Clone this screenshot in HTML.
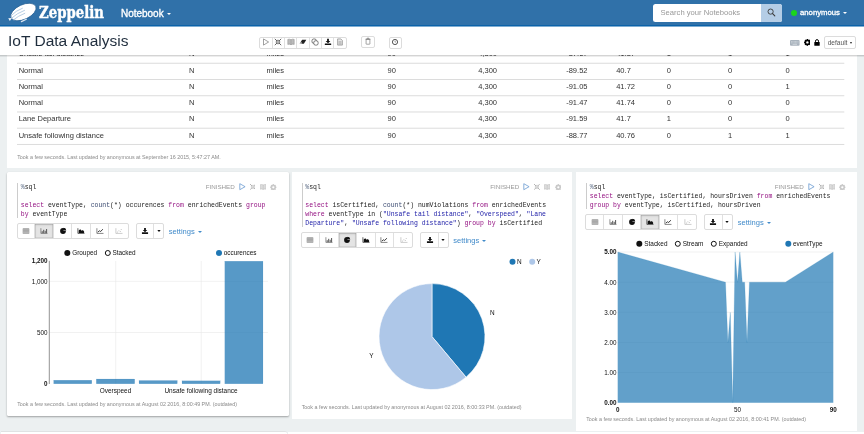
<!DOCTYPE html>
<html lang="en">
<head>
<meta charset="utf-8">
<title>IoT Data Analysis - Zeppelin</title>
<style>
*{box-sizing:border-box;margin:0;padding:0}
html,body{width:864px;height:434px;overflow:hidden;background:#ecf0f1;font-family:"Liberation Sans",sans-serif;color:#333}
body{position:relative;will-change:transform}
.abs{position:absolute}
.t{position:absolute;white-space:nowrap;line-height:1}
#nav{position:absolute;left:0;top:0;width:864px;height:26px;background:#3071a9;border-bottom:1px solid #0b62a8;box-shadow:0 1px 0 rgba(20,105,175,.55);z-index:5}
#brand{left:38.8px;top:5.4px;font-family:"DejaVu Serif Condensed","DejaVu Serif","Liberation Serif",serif;font-weight:bold;font-size:16.4px;color:#fff;transform:scaleX(.9);transform-origin:0 0;-webkit-text-stroke:.4px #fff}
#nb{left:121px;top:7.7px;font-size:10.5px;color:#fff;-webkit-text-stroke:.35px #fff;transform:scaleX(.948);transform-origin:0 0}
.caret{position:absolute;width:0;height:0;border-left:2.2px solid transparent;border-right:2.2px solid transparent;border-top:2.4px solid #fff}
#search{position:absolute;left:653px;top:3.5px;width:129.3px;height:18.8px;background:#fff;border-radius:2.5px;overflow:hidden}
#search .ph{left:7.5px;top:5.4px;font-size:7.63px;color:#999}
#search .btn{position:absolute;left:108.2px;top:0;width:21.1px;height:18.8px;background:#b4cde6}
#dot{position:absolute;left:790.8px;top:9.8px;width:6px;height:6px;border-radius:50%;background:#1bd61b}
#user{left:800px;top:8.7px;font-size:7.74px;color:#fff;-webkit-text-stroke:.3px #fff}
#titlebar{position:absolute;left:0;top:26px;width:864px;height:29px;background:#fff;box-shadow:0 1px 0 rgba(0,0,0,.1),0 2px 0 rgba(0,0,0,.07);z-index:4}
#title{left:7.7px;top:33px;font-size:15.2px;color:#1f2d3d;transform:scaleX(1.022);transform-origin:0 0}
.bg{position:absolute;border:.6px solid #dcdcdc;border-radius:2px;background:#fff;display:flex;overflow:hidden}
.bg>span{flex:1;border-right:.6px solid #e0e0e0;position:relative;display:block}
.bg>span:last-child{border-right:0}
.bg>span.on{background:#e4e4e4;box-shadow:inset 0 1px 2px rgba(0,0,0,.16),inset 0 0 0 .6px #c4c4c4}
.bg svg{position:absolute;left:50%;top:50%;transform:translate(-50%,-50%);overflow:visible}
.tb svg{margin-top:-1.1px}
.panel{position:absolute;background:#fff}
.cell{position:absolute;white-space:nowrap;line-height:1;font-size:7.52px;color:#333}
.foot{position:absolute;white-space:nowrap;line-height:1;font-size:5.37px;color:#8a8a8a}
.gut{position:absolute;width:0;border-left:1px solid #ccc}
.code{position:absolute;white-space:pre;font-family:"Liberation Mono",monospace;font-size:6.47px;line-height:9px;color:#222}
.o{color:#5b6b85}.k{color:#930f80}.f{color:#3c4c72}.s{color:#1a1aa6}
.fin{position:absolute;white-space:nowrap;line-height:1;font-size:6.24px;color:#999}
.set{position:absolute;white-space:nowrap;line-height:1;font-size:7.57px;color:#428bca}
svg text{font-family:"Liberation Sans",sans-serif}
</style>
</head>
<body>
<div id="nav"><svg class="abs" style="left:6px;top:1px" width="34" height="23" viewBox="6 1 34 23"><g transform="rotate(-25 23.4 12)"><ellipse cx="23.4" cy="12" rx="13.6" ry="7.3" fill="#fff" stroke="#245d91" stroke-width=".7"/><path d="M10.6 10.2 Q17 7.6 24.5 8.2 M10 12.6 Q17 10.4 25.5 11 M10.8 15 Q17 13.3 24.5 13.8" fill="none" stroke="#a9c4de" stroke-width=".75"/><path d="M10.2 12.6 L7 11.2 L7.4 14.4 Z" fill="#eef3f8"/><rect x="17" y="19.2" width="6.5" height="1.3" rx=".5" fill="#dce7f2"/></g></svg><div id="brand" class="t">Zeppelin</div><div id="nb" class="t">Notebook</div><i class="caret" style="left:167.2px;top:12.7px"></i><div id="search"><div class="ph t">Search your Notebooks</div><div class="btn"><svg class="abs" style="left:6.3px;top:4.6px" width="9" height="9" viewBox="0 0 9 9"><circle cx="3.6" cy="3.6" r="2.6" fill="none" stroke="#3a3a3a" stroke-width=".9"/><path d="M5.6 5.6 L7.8 7.8" stroke="#3a3a3a" stroke-width="1.1" stroke-linecap="round"/></svg></div></div><div id="dot"></div><div id="user" class="t">anonymous</div><i class="caret" style="left:842.6px;top:12.4px"></i></div>
<div id="titlebar"></div><div id="title" class="t" style="z-index:6">IoT Data Analysis</div><div class="bg tb" style="left:259.2px;top:37.2px;width:87.4px;height:11.4px;z-index:6"><span><svg width="6.6" height="7.4" viewBox="0 0 6.6 7.4"><path d="M.8 .6 L5.9 3.7 L.8 6.8 Z" fill="none" stroke="#777" stroke-width=".7" stroke-linejoin="round"/></svg></span><span><svg width="6.4" height="6.4" viewBox="0 0 6.4 6.4"><path d="M0 0 L2.2 2.2 M6.4 0 L4.2 2.2 M0 6.4 L2.2 4.2 M6.4 6.4 L4.2 4.2" stroke="#555" stroke-width=".9"/><path d="M1 2.6 H2.6 V1 M5.4 2.6 H3.8 V1 M1 3.8 H2.6 V5.4 M5.4 3.8 H3.8 V5.4" fill="none" stroke="#555" stroke-width=".7"/></svg></span><span><svg width="7" height="6.4" viewBox="0 0 7 6.4"><path d="M.3 .6 Q2 0 3.5 .9 Q5 0 6.7 .6 V5.6 Q5 5 3.5 5.9 Q2 5 .3 5.6 Z" fill="#bbb" stroke="#888" stroke-width=".5"/><path d="M3.5 .9 V5.9" stroke="#888" stroke-width=".4"/></svg></span><span><svg width="7" height="5" viewBox="0 0 7 5"><path d="M2.6 .3 H6.8 L4.4 4.3 H.2 Z" fill="#222"/><path d="M.9 3.1 L2.7 3.1 L2 4.3 L.2 4.3Z" fill="#ddd"/></svg></span><span><svg width="7" height="7" viewBox="0 0 7 7"><rect x=".5" y=".5" width="4.3" height="4.3" rx="1.6" fill="#fff" stroke="#444" stroke-width=".7"/><rect x="2.3" y="2.3" width="4.3" height="4.3" rx="1.6" fill="#fff" stroke="#444" stroke-width=".7"/></svg></span><span><svg width="6.4" height="6.4" viewBox="0 0 6.4 6.4"><path d="M2.3 0 H4.1 V2.2 H5.6 L3.2 4.5 L.8 2.2 H2.3 Z" fill="#111"/><rect x="0" y="4.6" width="6.4" height="1.7" rx=".3" fill="#111"/></svg></span><span><svg width="5.6" height="7" viewBox="0 0 5.6 7"><path d="M.4 .4 H3.6 L5.2 2 V6.6 H.4 Z" fill="#e8e8e8" stroke="#777" stroke-width=".6"/><path d="M1.3 3.2 H4.3 M1.3 4.4 H4.3 M1.3 5.5 H4.3" stroke="#888" stroke-width=".5"/></svg></span></div><div class="bg tb" style="left:361px;top:36.4px;width:13.5px;height:11.3px;z-index:6"><span><svg width="5.4" height="7" viewBox="0 0 5.4 7"><path d="M.8 1.8 H4.6 V6.3 Q4.6 6.7 4.2 6.7 H1.2 Q.8 6.7 .8 6.3 Z" fill="#fff" stroke="#666" stroke-width=".6"/><path d="M.2 1.7 H5.2 M1.9 1.5 V.6 H3.5 V1.5" fill="none" stroke="#666" stroke-width=".6"/></svg></span></div><div class="bg tb" style="left:389.2px;top:37.2px;width:12.4px;height:11.4px;z-index:6"><span><svg width="6.4" height="6.4" viewBox="0 0 6.4 6.4"><circle cx="3.2" cy="3.2" r="2.6" fill="#fff" stroke="#444" stroke-width=".9"/><path d="M3.2 1.7 V3.3 H4.2" fill="none" stroke="#555" stroke-width=".5"/></svg></span></div><svg class="abs" style="left:790.3px;top:40.2px;z-index:6" width="9.6" height="5.8" viewBox="0 0 9.6 5.8"><rect width="9.6" height="5.8" rx="1" fill="#a9b3bd"/><path d="M1.2 1.6 H8.4 M1.2 2.9 H8.4" stroke="#dfe4e8" stroke-width=".7" stroke-dasharray=".8 .5"/><path d="M2.6 4.3 H7" stroke="#dfe4e8" stroke-width=".7"/></svg><svg class="abs" style="left:803.6px;top:39.4px;z-index:6" width="6.8" height="6.8" viewBox="-3.6 -3.6 7.2 7.2"><circle r="2.35" fill="none" stroke="#000" stroke-width="1.5"/><g stroke="#000" stroke-width="1.3"><path d="M0 -3.5V3.5M-3.5 0H3.5M-2.5 -2.5L2.5 2.5M-2.5 2.5L2.5 -2.5"/></g><circle r="1.25" fill="#fff"/></svg><svg class="abs" style="left:814.3px;top:38.9px;z-index:6" width="6" height="7" viewBox="0 0 6 7"><path d="M1.5 3.2 V2.2 Q1.5 .6 3 .6 Q4.5 .6 4.5 2.2 V3.2" fill="none" stroke="#000" stroke-width="1"/><rect x=".3" y="3" width="5.4" height="3.7" rx=".5" fill="#000"/></svg><div class="bg" style="left:823.9px;top:36.2px;width:31.8px;height:12.4px;z-index:6"><span><b class="t" style="left:2.8px;top:2.6px;font-size:6.58px;font-weight:normal;color:#555">default</b><i class="caret" style="left:25.6px;top:5.3px;border-top-color:#222;border-width:2px 1.7px 0 1.7px;border-top-style:solid"></i></span></div>
<div class="panel" style="left:7px;top:50px;width:850px;height:118px"></div><div class="cell" style="left:18.7px;top:50.35px">Unsafe tail distance</div><div class="cell" style="left:189px;top:50.35px">N</div><div class="cell" style="left:266.5px;top:50.35px">miles</div><div class="cell" style="left:387.5px;top:50.35px">90</div><div class="cell" style="left:478.2px;top:50.35px">4,300</div><div class="cell" style="left:566.2px;top:50.35px">-87.67</div><div class="cell" style="left:616.2px;top:50.35px">41.87</div><div class="cell" style="left:666.7px;top:50.35px">1</div><div class="cell" style="left:728px;top:50.35px">1</div><div class="cell" style="left:785.5px;top:50.35px">1</div><div class="cell" style="left:18.7px;top:66.59px">Normal</div><div class="cell" style="left:189px;top:66.59px">N</div><div class="cell" style="left:266.5px;top:66.59px">miles</div><div class="cell" style="left:387.5px;top:66.59px">90</div><div class="cell" style="left:478.2px;top:66.59px">4,300</div><div class="cell" style="left:566.2px;top:66.59px">-89.52</div><div class="cell" style="left:616.2px;top:66.59px">40.7</div><div class="cell" style="left:666.7px;top:66.59px">0</div><div class="cell" style="left:728px;top:66.59px">0</div><div class="cell" style="left:785.5px;top:66.59px">0</div><div class="cell" style="left:18.7px;top:82.83px">Normal</div><div class="cell" style="left:189px;top:82.83px">N</div><div class="cell" style="left:266.5px;top:82.83px">miles</div><div class="cell" style="left:387.5px;top:82.83px">90</div><div class="cell" style="left:478.2px;top:82.83px">4,300</div><div class="cell" style="left:566.2px;top:82.83px">-91.05</div><div class="cell" style="left:616.2px;top:82.83px">41.72</div><div class="cell" style="left:666.7px;top:82.83px">0</div><div class="cell" style="left:728px;top:82.83px">0</div><div class="cell" style="left:785.5px;top:82.83px">1</div><div class="cell" style="left:18.7px;top:99.07px">Normal</div><div class="cell" style="left:189px;top:99.07px">N</div><div class="cell" style="left:266.5px;top:99.07px">miles</div><div class="cell" style="left:387.5px;top:99.07px">90</div><div class="cell" style="left:478.2px;top:99.07px">4,300</div><div class="cell" style="left:566.2px;top:99.07px">-91.47</div><div class="cell" style="left:616.2px;top:99.07px">41.74</div><div class="cell" style="left:666.7px;top:99.07px">0</div><div class="cell" style="left:728px;top:99.07px">0</div><div class="cell" style="left:785.5px;top:99.07px">0</div><div class="cell" style="left:18.7px;top:115.31px">Lane Departure</div><div class="cell" style="left:189px;top:115.31px">N</div><div class="cell" style="left:266.5px;top:115.31px">miles</div><div class="cell" style="left:387.5px;top:115.31px">90</div><div class="cell" style="left:478.2px;top:115.31px">4,300</div><div class="cell" style="left:566.2px;top:115.31px">-91.59</div><div class="cell" style="left:616.2px;top:115.31px">41.7</div><div class="cell" style="left:666.7px;top:115.31px">1</div><div class="cell" style="left:728px;top:115.31px">0</div><div class="cell" style="left:785.5px;top:115.31px">0</div><div class="cell" style="left:18.7px;top:131.55px">Unsafe following distance</div><div class="cell" style="left:189px;top:131.55px">N</div><div class="cell" style="left:266.5px;top:131.55px">miles</div><div class="cell" style="left:387.5px;top:131.55px">90</div><div class="cell" style="left:478.2px;top:131.55px">4,300</div><div class="cell" style="left:566.2px;top:131.55px">-88.77</div><div class="cell" style="left:616.2px;top:131.55px">40.76</div><div class="cell" style="left:666.7px;top:131.55px">0</div><div class="cell" style="left:728px;top:131.55px">1</div><div class="cell" style="left:785.5px;top:131.55px">1</div><div class="foot" style="left:17.2px;top:155px">Took a few seconds. Last updated by anonymous at September 16 2015, 5:47:27 AM.</div>
<div class="panel" style="left:7.2px;top:171.7px;width:281.5px;height:244.3px;border-radius:1.6px;box-shadow:0 1px 2px rgba(0,0,0,.33);"></div>
<div class="gut" style="left:17.3px;top:182.5px;height:35.6px"></div><div class="code" style="left:20.8px;top:183.4px"><span class="o">%</span>sql

<span class="k">select</span> eventType, <span class="f">count</span>(*) occurences <span class="k">from</span> enrichedEvents <span class="k">group</span>
<span class="k">by</span> eventType</div>
<div class="fin" style="left:205.7px;top:183.9px">FINISHED</div><svg class="abs" style="left:238.6px;top:183.3px" width="7" height="7.4" viewBox="0 0 7 7.4"><path d="M.8 .7 L6.1 3.7 L.8 6.7 Z" fill="none" stroke="#6a9bd1" stroke-width=".8" stroke-linejoin="round"/></svg><svg class="abs" style="left:249.5px;top:184px" width="5.8" height="5.8" viewBox="0 0 6 6"><path d="M0 0 L2.1 2.1 M6 0 L3.9 2.1 M0 6 L2.1 3.9 M6 6 L3.9 3.9" stroke="#aaa" stroke-width=".9"/><path d="M.9 2.5 H2.5 V.9 M5.1 2.5 H3.5 V.9 M.9 3.5 H2.5 V5.1 M5.1 3.5 H3.5 V5.1" fill="none" stroke="#b5b5b5" stroke-width=".6"/></svg><svg class="abs" style="left:259.6px;top:183.8px" width="6.4" height="6" viewBox="0 0 7 6.4"><path d="M.3 .6 Q2 0 3.5 .9 Q5 0 6.7 .6 V5.6 Q5 5 3.5 5.9 Q2 5 .3 5.6 Z" fill="#dcdcdc" stroke="#b4b4b4" stroke-width=".5"/><path d="M3.5 .9 V5.9" stroke="#b4b4b4" stroke-width=".4"/></svg><svg class="abs" style="left:270.4px;top:183.6px" width="6.6" height="6.6" viewBox="-3.6 -3.6 7.2 7.2"><circle r="2.35" fill="none" stroke="#c8c8c8" stroke-width="1.3"/><g stroke="#c8c8c8" stroke-width="1.1"><path d="M0 -3.5V3.5M-3.5 0H3.5M-2.5 -2.5L2.5 2.5M-2.5 2.5L2.5 -2.5"/></g><circle r="1.2" fill="#fff"/></svg>
<div class="bg" style="left:16.6px;top:223.2px;width:112px;height:16.2px"><span style="flex:0 0 17.5px"><svg width="6.6" height="5.6" viewBox="0 0 6.6 5.6"><rect width="6.6" height="5.6" rx=".5" fill="#9a9a9a"/><path d="M0 1.6H6.6M0 3H6.6M0 4.3H6.6" stroke="#d0d0d0" stroke-width=".5"/></svg></span><span style="flex:0 0 19.2px" class="on"><svg width="7" height="5.6" viewBox="0 0 7 5.6"><path d="M.4 0 V5.2 H7" fill="none" stroke="#666" stroke-width=".7"/><path d="M1.7 5V3M3.2 5V1.6M4.7 5V2.6M6.1 5V.8" stroke="#555" stroke-width="1"/></svg></span><span style="flex:0 0 18.1px"><svg width="6" height="6" viewBox="0 0 6 6"><circle cx="3" cy="3" r="2.9" fill="#111"/><path d="M3 3 L6 3 L5.6 1.2 Z" fill="#fff"/><path d="M3.3 2.7 V0 A3 3 0 0 1 6 2.7 Z" fill="#111" transform="translate(.3 -.3)"/></svg></span><span style="flex:0 0 18.8px"><svg width="7" height="5.6" viewBox="0 0 7 5.6"><path d="M.4 0 V5.2 H7" fill="none" stroke="#222" stroke-width=".7"/><path d="M1.2 4.9 V2.2 L2.7 1 L4.2 2.6 L5.4 1.9 L6.6 3.4 V4.9 Z" fill="#111"/></svg></span><span style="flex:0 0 18.2px"><svg width="7" height="5.6" viewBox="0 0 7 5.6"><path d="M.4 0 V5.2 H7" fill="none" stroke="#555" stroke-width=".7"/><path d="M1.3 4 L2.9 2.6 L4.2 3.3 L6.3 1" fill="none" stroke="#222" stroke-width=".9"/></svg></span><span style="flex:0 0 19.4px"><svg width="7" height="5.6" viewBox="0 0 7 5.6"><path d="M.4 0 V5.2 H7" fill="none" stroke="#aaa" stroke-width=".6"/><path d="M1.6 3.9h.8M3 2.6h.8M4.4 3.3h.8M5.3 1.3h.8" stroke="#aaa" stroke-width=".8"/></svg></span></div><div class="bg" style="left:135.8px;top:223.2px;width:28.4px;height:16.2px"><span style="flex:0 0 17.6px"><svg width="6.2" height="6" viewBox="0 0 6.2 6"><path d="M2.2 0 H4 V2 H5.4 L3.1 4.2 L.8 2 H2.2 Z" fill="#111"/><rect x="0" y="4.3" width="6.2" height="1.6" rx=".3" fill="#111"/></svg></span><span><svg width="3.4" height="2" viewBox="0 0 3.4 2"><path d="M0 0 H3.4 L1.7 2 Z" fill="#111"/></svg></span></div><div class="set" style="left:168.7px;top:227.5px">settings</div><i class="caret" style="left:197.9px;top:230.8px;border-top-color:#428bca;border-width:2.7px 2.3px 0 2.3px"></i><div class="foot" style="left:17.2px;top:401.7px">Took a few seconds. Last updated by anonymous at August 02 2016, 8:00:49 PM. (outdated)</div>
<div class="panel" style="left:291.8px;top:171.7px;width:280.7px;height:247.0px;"></div>
<div class="gut" style="left:301.8px;top:182.5px;height:44.5px"></div><div class="code" style="left:305.3px;top:183.4px"><span class="o">%</span>sql

<span class="k">select</span> isCertified, <span class="f">count</span>(*) numViolations <span class="k">from</span> enrichedEvents
<span class="k">where</span> eventType in (<span class="s">&quot;Unsafe tail distance&quot;</span>, <span class="s">&quot;Overspeed&quot;</span>, <span class="s">&quot;Lane</span>
<span class="s">Departure&quot;</span>, <span class="s">&quot;Unsafe following distance&quot;</span>) <span class="k">group</span> <span class="k">by</span> isCertified</div>
<div class="fin" style="left:490.2px;top:183.9px">FINISHED</div><svg class="abs" style="left:523.1px;top:183.3px" width="7" height="7.4" viewBox="0 0 7 7.4"><path d="M.8 .7 L6.1 3.7 L.8 6.7 Z" fill="none" stroke="#6a9bd1" stroke-width=".8" stroke-linejoin="round"/></svg><svg class="abs" style="left:534.0px;top:184px" width="5.8" height="5.8" viewBox="0 0 6 6"><path d="M0 0 L2.1 2.1 M6 0 L3.9 2.1 M0 6 L2.1 3.9 M6 6 L3.9 3.9" stroke="#aaa" stroke-width=".9"/><path d="M.9 2.5 H2.5 V.9 M5.1 2.5 H3.5 V.9 M.9 3.5 H2.5 V5.1 M5.1 3.5 H3.5 V5.1" fill="none" stroke="#b5b5b5" stroke-width=".6"/></svg><svg class="abs" style="left:544.1px;top:183.8px" width="6.4" height="6" viewBox="0 0 7 6.4"><path d="M.3 .6 Q2 0 3.5 .9 Q5 0 6.7 .6 V5.6 Q5 5 3.5 5.9 Q2 5 .3 5.6 Z" fill="#dcdcdc" stroke="#b4b4b4" stroke-width=".5"/><path d="M3.5 .9 V5.9" stroke="#b4b4b4" stroke-width=".4"/></svg><svg class="abs" style="left:554.9px;top:183.6px" width="6.6" height="6.6" viewBox="-3.6 -3.6 7.2 7.2"><circle r="2.35" fill="none" stroke="#c8c8c8" stroke-width="1.3"/><g stroke="#c8c8c8" stroke-width="1.1"><path d="M0 -3.5V3.5M-3.5 0H3.5M-2.5 -2.5L2.5 2.5M-2.5 2.5L2.5 -2.5"/></g><circle r="1.2" fill="#fff"/></svg>
<div class="bg" style="left:301.1px;top:232.2px;width:112px;height:16.2px"><span style="flex:0 0 17.5px"><svg width="6.6" height="5.6" viewBox="0 0 6.6 5.6"><rect width="6.6" height="5.6" rx=".5" fill="#9a9a9a"/><path d="M0 1.6H6.6M0 3H6.6M0 4.3H6.6" stroke="#d0d0d0" stroke-width=".5"/></svg></span><span style="flex:0 0 19.2px"><svg width="7" height="5.6" viewBox="0 0 7 5.6"><path d="M.4 0 V5.2 H7" fill="none" stroke="#666" stroke-width=".7"/><path d="M1.7 5V3M3.2 5V1.6M4.7 5V2.6M6.1 5V.8" stroke="#555" stroke-width="1"/></svg></span><span style="flex:0 0 18.1px" class="on"><svg width="6" height="6" viewBox="0 0 6 6"><circle cx="3" cy="3" r="2.9" fill="#111"/><path d="M3 3 L6 3 L5.6 1.2 Z" fill="#fff"/><path d="M3.3 2.7 V0 A3 3 0 0 1 6 2.7 Z" fill="#111" transform="translate(.3 -.3)"/></svg></span><span style="flex:0 0 18.8px"><svg width="7" height="5.6" viewBox="0 0 7 5.6"><path d="M.4 0 V5.2 H7" fill="none" stroke="#222" stroke-width=".7"/><path d="M1.2 4.9 V2.2 L2.7 1 L4.2 2.6 L5.4 1.9 L6.6 3.4 V4.9 Z" fill="#111"/></svg></span><span style="flex:0 0 18.2px"><svg width="7" height="5.6" viewBox="0 0 7 5.6"><path d="M.4 0 V5.2 H7" fill="none" stroke="#555" stroke-width=".7"/><path d="M1.3 4 L2.9 2.6 L4.2 3.3 L6.3 1" fill="none" stroke="#222" stroke-width=".9"/></svg></span><span style="flex:0 0 19.4px"><svg width="7" height="5.6" viewBox="0 0 7 5.6"><path d="M.4 0 V5.2 H7" fill="none" stroke="#aaa" stroke-width=".6"/><path d="M1.6 3.9h.8M3 2.6h.8M4.4 3.3h.8M5.3 1.3h.8" stroke="#aaa" stroke-width=".8"/></svg></span></div><div class="bg" style="left:420.3px;top:232.2px;width:28.4px;height:16.2px"><span style="flex:0 0 17.6px"><svg width="6.2" height="6" viewBox="0 0 6.2 6"><path d="M2.2 0 H4 V2 H5.4 L3.1 4.2 L.8 2 H2.2 Z" fill="#111"/><rect x="0" y="4.3" width="6.2" height="1.6" rx=".3" fill="#111"/></svg></span><span><svg width="3.4" height="2" viewBox="0 0 3.4 2"><path d="M0 0 H3.4 L1.7 2 Z" fill="#111"/></svg></span></div><div class="set" style="left:453.2px;top:236.5px">settings</div><i class="caret" style="left:482.4px;top:239.8px;border-top-color:#428bca;border-width:2.7px 2.3px 0 2.3px"></i><div class="foot" style="left:301.7px;top:405.0px">Took a few seconds. Last updated by anonymous at August 02 2016, 8:00:33 PM. (outdated)</div>
<div class="panel" style="left:576.1px;top:171.7px;width:280.7px;height:258.9px;"></div>
<div class="gut" style="left:586.3px;top:182.5px;height:26.7px"></div><div class="code" style="left:589.8px;top:183.4px"><span class="o">%</span>sql
<span class="k">select</span> eventType, isCertified, hoursDriven <span class="k">from</span> enrichedEvents
<span class="k">group</span> <span class="k">by</span> eventType, isCertified, hoursDriven</div>
<div class="fin" style="left:774.7px;top:183.9px">FINISHED</div><svg class="abs" style="left:807.6px;top:183.3px" width="7" height="7.4" viewBox="0 0 7 7.4"><path d="M.8 .7 L6.1 3.7 L.8 6.7 Z" fill="none" stroke="#6a9bd1" stroke-width=".8" stroke-linejoin="round"/></svg><svg class="abs" style="left:818.5px;top:184px" width="5.8" height="5.8" viewBox="0 0 6 6"><path d="M0 0 L2.1 2.1 M6 0 L3.9 2.1 M0 6 L2.1 3.9 M6 6 L3.9 3.9" stroke="#aaa" stroke-width=".9"/><path d="M.9 2.5 H2.5 V.9 M5.1 2.5 H3.5 V.9 M.9 3.5 H2.5 V5.1 M5.1 3.5 H3.5 V5.1" fill="none" stroke="#b5b5b5" stroke-width=".6"/></svg><svg class="abs" style="left:828.6px;top:183.8px" width="6.4" height="6" viewBox="0 0 7 6.4"><path d="M.3 .6 Q2 0 3.5 .9 Q5 0 6.7 .6 V5.6 Q5 5 3.5 5.9 Q2 5 .3 5.6 Z" fill="#dcdcdc" stroke="#b4b4b4" stroke-width=".5"/><path d="M3.5 .9 V5.9" stroke="#b4b4b4" stroke-width=".4"/></svg><svg class="abs" style="left:839.4px;top:183.6px" width="6.6" height="6.6" viewBox="-3.6 -3.6 7.2 7.2"><circle r="2.35" fill="none" stroke="#c8c8c8" stroke-width="1.3"/><g stroke="#c8c8c8" stroke-width="1.1"><path d="M0 -3.5V3.5M-3.5 0H3.5M-2.5 -2.5L2.5 2.5M-2.5 2.5L2.5 -2.5"/></g><circle r="1.2" fill="#fff"/></svg>
<div class="bg" style="left:585.3px;top:214.2px;width:112px;height:16.2px"><span style="flex:0 0 17.5px"><svg width="6.6" height="5.6" viewBox="0 0 6.6 5.6"><rect width="6.6" height="5.6" rx=".5" fill="#9a9a9a"/><path d="M0 1.6H6.6M0 3H6.6M0 4.3H6.6" stroke="#d0d0d0" stroke-width=".5"/></svg></span><span style="flex:0 0 19.2px"><svg width="7" height="5.6" viewBox="0 0 7 5.6"><path d="M.4 0 V5.2 H7" fill="none" stroke="#666" stroke-width=".7"/><path d="M1.7 5V3M3.2 5V1.6M4.7 5V2.6M6.1 5V.8" stroke="#555" stroke-width="1"/></svg></span><span style="flex:0 0 18.1px"><svg width="6" height="6" viewBox="0 0 6 6"><circle cx="3" cy="3" r="2.9" fill="#111"/><path d="M3 3 L6 3 L5.6 1.2 Z" fill="#fff"/><path d="M3.3 2.7 V0 A3 3 0 0 1 6 2.7 Z" fill="#111" transform="translate(.3 -.3)"/></svg></span><span style="flex:0 0 18.8px" class="on"><svg width="7" height="5.6" viewBox="0 0 7 5.6"><path d="M.4 0 V5.2 H7" fill="none" stroke="#222" stroke-width=".7"/><path d="M1.2 4.9 V2.2 L2.7 1 L4.2 2.6 L5.4 1.9 L6.6 3.4 V4.9 Z" fill="#111"/></svg></span><span style="flex:0 0 18.2px"><svg width="7" height="5.6" viewBox="0 0 7 5.6"><path d="M.4 0 V5.2 H7" fill="none" stroke="#555" stroke-width=".7"/><path d="M1.3 4 L2.9 2.6 L4.2 3.3 L6.3 1" fill="none" stroke="#222" stroke-width=".9"/></svg></span><span style="flex:0 0 19.4px"><svg width="7" height="5.6" viewBox="0 0 7 5.6"><path d="M.4 0 V5.2 H7" fill="none" stroke="#aaa" stroke-width=".6"/><path d="M1.6 3.9h.8M3 2.6h.8M4.4 3.3h.8M5.3 1.3h.8" stroke="#aaa" stroke-width=".8"/></svg></span></div><div class="bg" style="left:704.2px;top:214.2px;width:28.4px;height:16.2px"><span style="flex:0 0 17.6px"><svg width="6.2" height="6" viewBox="0 0 6.2 6"><path d="M2.2 0 H4 V2 H5.4 L3.1 4.2 L.8 2 H2.2 Z" fill="#111"/><rect x="0" y="4.3" width="6.2" height="1.6" rx=".3" fill="#111"/></svg></span><span><svg width="3.4" height="2" viewBox="0 0 3.4 2"><path d="M0 0 H3.4 L1.7 2 Z" fill="#111"/></svg></span></div><div class="set" style="left:737.7px;top:218.5px">settings</div><i class="caret" style="left:766.9px;top:221.8px;border-top-color:#428bca;border-width:2.7px 2.3px 0 2.3px"></i><div class="foot" style="left:586.2px;top:416.9px">Took a few seconds. Last updated by anonymous at August 02 2016, 8:00:41 PM. (outdated)</div>
<div class="panel" style="left:1px;top:431.4px;width:286px;height:10px;border-top:1.6px solid #e0e2e3;border-radius:0 2px 0 0"></div><div class="panel" style="left:288px;top:431.7px;width:576px;height:10px"></div>
<svg class="abs" style="left:0;top:0;z-index:3" width="864" height="434" viewBox="0 0 864 434">
<g fill="#dcdcdc"><rect x="17" y="62.75" width="827.3" height="1"/><rect x="17" y="78.99" width="827.3" height="1"/><rect x="17" y="95.23" width="827.3" height="1"/><rect x="17" y="111.47" width="827.3" height="1"/><rect x="17" y="127.71" width="827.3" height="1"/><rect x="17" y="143.95" width="827.3" height="1"/></g>
<g font-size="6.42" fill="#111">
<circle cx="67.3" cy="253" r="3" fill="#111"/><text x="72.2" y="255.3">Grouped</text>
<circle cx="107.8" cy="253" r="2.5" fill="#fff" stroke="#111" stroke-width="1"/><text x="112.5" y="255.3">Stacked</text>
<circle cx="219" cy="253" r="3" fill="#1f77b4"/><text x="223.7" y="255.3">occurences</text>
</g>
<g stroke="#e8e8e8" stroke-width=".6"><path d="M49.5 281.3H268M49.5 332.5H268M115.7 261V384M201.2 261V384"/></g>
<path d="M49.3 260.8V384" stroke="#888" stroke-width=".9"/>
<rect x="53.7" y="380.2" width="38.1" height="3.6" fill="#1f77b4" fill-opacity=".75" stroke="#1f77b4" stroke-opacity=".3" stroke-width=".3"/>
<rect x="96.3" y="379" width="38.4" height="4.8" fill="#1f77b4" fill-opacity=".75" stroke="#1f77b4" stroke-opacity=".3" stroke-width=".3"/>
<rect x="139" y="380.5" width="38.3" height="3.3" fill="#1f77b4" fill-opacity=".75" stroke="#1f77b4" stroke-opacity=".3" stroke-width=".3"/>
<rect x="182" y="380.8" width="38.2" height="3.0" fill="#1f77b4" fill-opacity=".75" stroke="#1f77b4" stroke-opacity=".3" stroke-width=".3"/>
<rect x="224.8" y="261.2" width="38.2" height="122.6" fill="#1f77b4" fill-opacity=".75" stroke="#1f77b4" stroke-opacity=".3" stroke-width=".3"/>
<g font-size="6.3" fill="#111" text-anchor="end"><text x="47.4" y="263.1" font-weight="bold">1,200</text><text x="47.4" y="283.6">1,000</text><text x="47.4" y="334.8">500</text><text x="47.4" y="386" font-weight="bold">0</text></g>
<g font-size="6.46" fill="#111" text-anchor="middle"><text x="115.5" y="392.6">Overspeed</text><text x="201" y="392.6">Unsafe following distance</text></g>
<path d="M432 336.6 L432 283.6 A53 53 0 0 1 466.07 377.20 Z" fill="#1f77b4" stroke="#fff" stroke-width=".6"/>
<path d="M432 336.6 L466.07 377.20 A53 53 0 1 1 432 283.6 Z" fill="#aec7e8" stroke="#fff" stroke-width=".6"/>
<g font-size="6.42" fill="#111"><circle cx="512.5" cy="261.7" r="3" fill="#1f77b4"/><text x="517" y="264">N</text><circle cx="532.2" cy="261.7" r="3" fill="#aec7e8"/><text x="536.6" y="264">Y</text>
<text x="490" y="314.9">N</text><text x="369.2" y="358.4">Y</text></g>
<g stroke="#e8e8e8" stroke-width=".6"><path d="M617.7 372.64H833.3 M617.7 342.48H833.3 M617.7 312.32H833.3 M617.7 282.16H833.3 M617.7 252.00H833.3"/></g>
<path d="M617.7 402.8 L617.70 252.00 L725.50 282.16 L727.90 342.48 L730.29 312.32 L732.69 402.80 L735.08 252.00 L737.48 282.16 L739.87 252.00 L742.27 282.16 L744.66 282.16 L747.06 342.48 L749.46 282.16 L785.39 282.16 L833.30 252.00 L833.3 402.8 Z" fill="#1f77b4" fill-opacity=".7"/>
<path d="M617.7 252.00 L617.70 252.00 L725.50 282.16 L727.90 342.48 L730.29 312.32 L732.69 402.80 L735.08 252.00 L737.48 282.16 L739.87 252.00 L742.27 282.16 L744.66 282.16 L747.06 342.48 L749.46 282.16 L785.39 282.16 L833.30 252.00" fill="none" stroke="#1f77b4" stroke-opacity=".5" stroke-width=".35"/>
<g font-size="6.42" fill="#111">
<circle cx="639.3" cy="243.8" r="3" fill="#111"/><text x="644.3" y="246.1">Stacked</text>
<circle cx="677.8" cy="243.8" r="2.5" fill="#fff" stroke="#111" stroke-width="1"/><text x="682.8" y="246.1">Stream</text>
<circle cx="713.8" cy="243.8" r="2.5" fill="#fff" stroke="#111" stroke-width="1"/><text x="718.8" y="246.1">Expanded</text>
<circle cx="788.3" cy="243.8" r="3" fill="#1f77b4"/><text x="793" y="246.1">eventType</text>
</g>
<g font-size="6.3" fill="#111" text-anchor="end">
<text x="616.4" y="405.1" font-weight="bold">0.00</text>
<text x="616.4" y="374.9">1.00</text>
<text x="616.4" y="344.8">2.00</text>
<text x="616.4" y="314.6">3.00</text>
<text x="616.4" y="284.5">4.00</text>
<text x="616.4" y="254.3" font-weight="bold">5.00</text>
</g>
<g font-size="6.3" fill="#111" text-anchor="middle"><text x="617.7" y="411.8" font-weight="bold">0</text><text x="737.6" y="411.8">50</text><text x="833.3" y="411.8" font-weight="bold">90</text></g>
</svg>
</body>
</html>
